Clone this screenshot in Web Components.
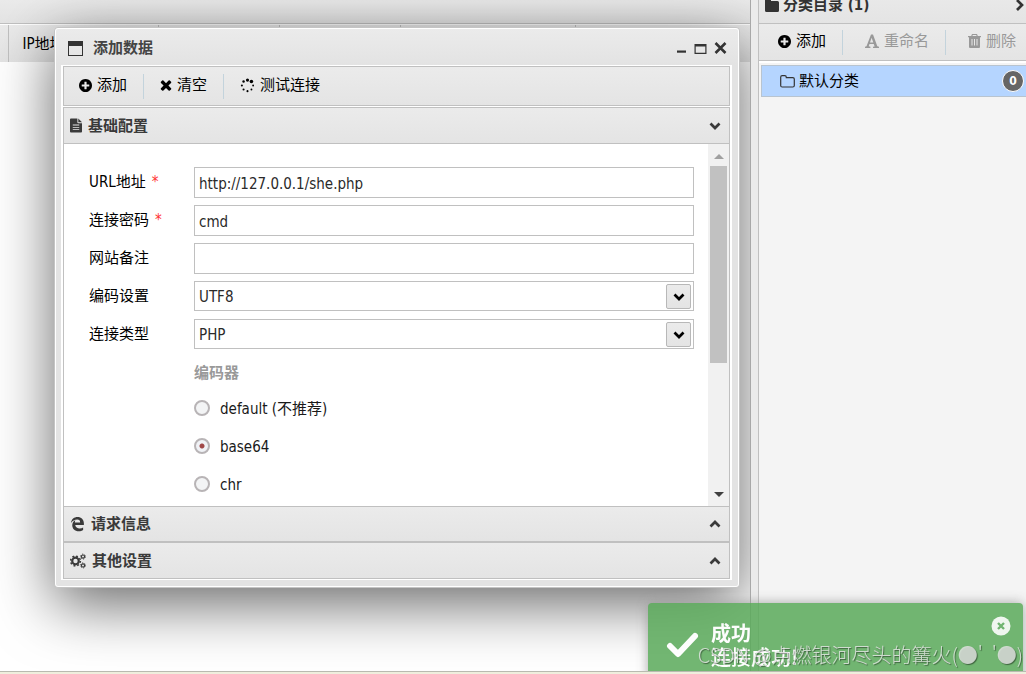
<!DOCTYPE html>
<html lang="zh-CN">
<head>
<meta charset="utf-8">
<title>数据管理</title>
<style>
html, body { height: 100%; margin: 0; }
body {
  overflow: hidden;
  background: #ebebeb;
  color: #000;
  font: 15px/20px "DejaVu Sans Condensed", "Noto Sans CJK SC", sans-serif;
  --line: #c0c0c0;
  --bar: linear-gradient(#ebebeb, #e4e4e4);
}
</style>
</head>
<body>
<app-shell>
  <data-grid slot="main"></data-grid>
  <modal-window slot="main" heading="添加数据">
    <tool-bar slot="tools" class="boxed">
      <tool-button icon="plus">添加</tool-button>
      <tool-button icon="times">清空</tool-button>
      <tool-button icon="spinner">测试连接</tool-button>
    </tool-bar>
    <accordion-section icon="file" heading="基础配置" open>
      <form-row label="URL地址" required value="http://127.0.0.1/she.php"></form-row>
      <form-row label="连接密码" required value="cmd"></form-row>
      <form-row label="网站备注"></form-row>
      <form-row label="编码设置" options="UTF8,GBK"></form-row>
      <form-row label="连接类型" options="PHP,ASP"></form-row>
      <radio-list heading="编码器" options="default (不推荐)|base64|chr" selected="1"></radio-list>
    </accordion-section>
    <accordion-section icon="edge" heading="请求信息"></accordion-section>
    <accordion-section icon="cogs" heading="其他设置"></accordion-section>
  </modal-window>
  <category-panel slot="side">
    <tool-bar slot="tools" class="wide">
      <tool-button icon="plus">添加</tool-button>
      <tool-button icon="font" disabled>重命名</tool-button>
      <tool-button icon="trash" disabled>删除</tool-button>
    </tool-bar>
    <category-item count="0">默认分类</category-item>
  </category-panel>
  <toast-message slot="overlay" heading="成功">连接成功!</toast-message>
  <water-mark slot="overlay">CSDN @点燃银河尽头的篝火(●'&nbsp;&nbsp;'●)</water-mark>
</app-shell>

<script>
const ICONS = {
  plus: [13, 13, '128 128 1536 1536', '<path d="M1344 960v-128q0-26-19-45t-45-19h-256v-256q0-26-19-45t-45-19h-128q-26 0-45 19t-19 45v256h-256q-26 0-45 19t-19 45v128q0 26 19 45t45 19h256v256q0 26 19 45t45 19h128q26 0 45-19t19-45v-256h256q26 0 45-19t19-45zm320-64q0 209-103 385.5t-279.5 279.5-385.5 103-385.5-103-279.5-279.5-103-385.5 103-385.5 279.5-279.5 385.5-103 385.5 103 279.5 279.5 103 385.5z"/>'],
  times: [12, 12, '220 220 1350 1350', '<path d="M1490 1322q0 40-28 68l-136 136q-28 28-68 28t-68-28l-294-294-294 294q-28 28-68 28t-68-28l-136-136q-28-28-28-68t28-68l294-294-294-294q-28-28-28-68t28-68l136-136q28-28 68-28t68 28l294 294 294-294q28-28 68-28t68 28l136 136q28 28 28 68t-28 68l-294 294 294 294q28 28 28 68z"/>'],
  spinner: [15, 15, '0 0 16 16', '<circle cx="8" cy="2.2" r="1.700"/><circle cx="12.200" cy="3.800" r="1.900"/><circle cx="3.800" cy="3.800" r="1.300"/><circle cx="2" cy="8" r="1.100"/><circle cx="14" cy="8" r="1"/><circle cx="3.800" cy="12.200" r="1.100"/><circle cx="12.200" cy="12.200" r="1"/><circle cx="8" cy="14" r="1.100"/>'],
  file: [12, 15, '0 0 13 15', '<path d="M0 1q0-1 1-1h7v4q0 1 1 1h4v9q0 1-1 1H1q-1 0-1-1zM3 6.5v1h7v-1zM3 9v1h7V9zM3 11.5v1h7v-1z" fill-rule="evenodd"/><path d="M9 0l4 4H9z"/>'],
  edge: [15, 16, '0 0 16 17', '<path d="M1 7.4C1.6 3.2 4.4 1 8 1c4 0 6.800 2.800 6.800 6.600v2H5.600C5.800 12 8 13.200 10.200 13.200c1.600 0 2.800-.4 3.800-1v2.700C12.800 15.700 11.200 16.200 9.400 16.200 5 16.200 2.400 13.400 2.400 9.800c0-2.400 1.200-4.400 3.400-5.400-.4.6-.6 1.600-.6 2.400h5.600C10.800 4.800 9.800 3.800 7.800 3.800 5 3.800 2.400 5.200 1 7.400z"/>'],
  cogs: [16, 16, '0 0 16 16', '<g fill="none" stroke="currentColor"><circle cx="5.500" cy="8" r="3.300" stroke-width="2.200"/><circle cx="5.500" cy="8" r="4.900" stroke-width="1.500" stroke-dasharray="1.900 1.950"/><circle cx="13" cy="3.600" r="1.600" stroke-width="1.200"/><circle cx="13" cy="3.600" r="2.500" stroke-width=".9" stroke-dasharray="1.200 1.420"/><circle cx="13" cy="12.400" r="1.600" stroke-width="1.200"/><circle cx="13" cy="12.400" r="2.500" stroke-width=".9" stroke-dasharray="1.200 1.420"/></g>'],
  down: [12, 12, '0 0 12 12', '<path d="M1.500 3.500L6 8l4.500-4.500" fill="none" stroke="currentColor" stroke-width="2.700"/>'],
  up: [12, 12, '0 0 12 12', '<path d="M1.500 8.500L6 4l4.500 4.500" fill="none" stroke="currentColor" stroke-width="2.700"/>'],
  right: [12, 12, '0 0 12 12', '<path d="M4 1l5 5-5 5" fill="none" stroke="currentColor" stroke-width="2.700"/>'],
  font: [14, 14, '0 0 14 14', '<path d="M0 14v-1.200l1.500-.5L6 .5h2L12.300 12.300l1.700.5V14H8v-1.200l1.600-.4-.8-2.500H4.500l-.8 2.400 1.700.5V14zM5 8.400h3.300L6.600 3.700z" fill-rule="evenodd"/>'],
  trash: [13, 14, '0 0 13 14', '<path d="M4 0h5l.8 2H13v1.300h-1V13q0 1-1 1H2q-1 0-1-1V3.300H0V2h3.200zm.8 1l-.4 1h4.200l-.4-1zM3.500 5v6.500h1V5zM6 5v6.500h1V5zM8.500 5v6.500h1V5z" fill-rule="evenodd"/>'],
  folder: [14, 13, '0 0 14 13', '<path d="M0 1.500Q0 0 1.500 0h3Q6 0 6 1.500V2h6.500Q14 2 14 3.500v8q0 1.500-1.500 1.500h-11Q0 13 0 11.500z"/>'],
  folderOpen: [15, 13, '0 0 15 13', '<path d="M.7 2.200Q.7.700 2.200.7h2.600q1.500 0 1.500 1.500v.4h6.500q1.500 0 1.500 1.500v6.400q0 1.500-1.500 1.500H2.200Q.7 12 .7 10.500z" fill="none" stroke="currentColor" stroke-width="1.200"/>'],
  window: [15, 15, '0 0 15 15', '<path d="M0 0h15v15H0zM1 5v9h13V5z" fill-rule="evenodd"/>'],
  minimize: [10, 12, '0 0 10 12', '<path d="M0 8.500h9v2.200H0z"/>'],
  maximize: [13, 11, '0 0 13 11', '<path d="M.5 1h12v10H.5zM1.700 3.600v6.200h9.600V3.600z" fill-rule="evenodd"/>'],
  close: [13, 12, '0 0 13 12', '<path d="M1.500 1l10 10M11.500 1l-10 10" stroke="currentColor" stroke-width="2.600"/>'],
  check: [34, 28, '0 0 34 28', '<path d="M5 15l8 8L30 5" fill="none" stroke="currentColor" stroke-width="6" stroke-linecap="round" stroke-linejoin="round"/>'],
  dismiss: [20, 20, '0 0 20 20', '<circle cx="10" cy="10" r="9.500"/><path d="M7 7l6 6M13 7l-6 6" stroke="#5baa5b" stroke-width="2.400"/>']
};

function define(name, render) {
  customElements.define(name, class extends HTMLElement {
    connectedCallback() {
      if (this.shadowRoot) return;
      this.attachShadow({ mode: 'open' }).innerHTML = render(this);
    }
  });
}

define('ui-icon', el => {
  const [w, h, box, body] = ICONS[el.getAttribute('name')];
  return `<style>:host{display:inline-flex;flex:none}svg{display:block;fill:currentColor}</style>
    <svg width="${w}" height="${h}" viewBox="${box}" aria-hidden="true">${body}</svg>`;
});

define('app-shell', () => `<style>
  :host { display: grid; height: 100vh; grid-template: minmax(0, 1fr) 3px / minmax(0, 1fr) 268px; column-gap: 7px; }
  .main { position: relative; overflow: hidden; background: #fff; border-right: 1px solid #a8a8a8; }
  .side { overflow: hidden; border-left: 1px solid var(--line); background: #f4f4f4; }
  footer { grid-column: 1 / -1; position: relative; z-index: 3; background: #efeedd; border-top: 1px solid #b9bab0; }
  </style>
  <div class="main"><slot name="main"></slot></div>
  <div class="side"><slot name="side"></slot></div>
  <footer></footer>
  <slot name="overlay"></slot>`);

define('data-grid', () => `<style>
  :host { display: block; }
  .bar { height: 23px; background: var(--bar); border-bottom: 1px solid var(--line); }
  table { width: 100%; margin-top: 1px; table-layout: fixed; border-collapse: collapse; background: var(--bar); }
  th { height: 37px; padding: 0 0 0 14px; font-weight: normal; text-align: left; border-right: 1px solid var(--line); box-sizing: border-box; }
  th:last-child { border-right: 0; }
  </style>
  <div class="bar"></div>
  <table><colgroup><col style="width:8px"><col style="width:150px"><col style="width:121px"><col style="width:121px"><col style="width:175px"><col></colgroup>
  <thead><tr><th></th><th>IP地址</th><th></th><th></th><th></th><th></th></tr></thead></table>`);

define('tool-bar', () => `<style>
  :host { display: flex; align-items: center; height: 36px; background: var(--bar); }
  :host(.boxed) { height: 38px; border: 1px solid var(--line); --pad: 16px; --pad-first: 15px; }
  :host(.wide) { --pad: 22px; --pad-first: 19px; }
  </style><slot></slot>`);

define('tool-button', el => `<style>
  :host { display: block; flex: none; border-right: 1px solid #c3d3dc; }
  :host(:last-child) { border: 0; }
  button { display: flex; align-items: center; gap: 5px; height: 25px; padding: 0 16px 2px var(--pad); border: 0; background: none; color: #000; font: inherit; white-space: nowrap; }
  :host(:first-child) button { padding-left: var(--pad-first); }
  button:disabled { color: #999; }
  </style>
  <button type="button" ${el.hasAttribute('disabled') ? 'disabled' : ''}><ui-icon name="${el.getAttribute('icon')}"></ui-icon><slot></slot></button>`);

define('modal-window', el => `<style>
  :host { position: absolute; top: 27px; left: 54px; width: 686px; box-sizing: border-box; border: 1px solid #c4c4c4; border-radius: 4px; background: #e3e3e3; box-shadow: 0 16px 60px rgba(0, 0, 0, .6); }
  .frame { border: 1px solid #fff; border-radius: 3px; padding: 0 6px 6px 5px; background: linear-gradient(#ebebeb, #e3e3e3 36px); }
  header { display: flex; align-items: center; height: 36px; padding: 2px 5px 0 7px; box-sizing: border-box; color: #333; }
  h1 { flex: 1; margin: 0 0 0 10px; font-size: 15px; line-height: 20px; color: #444; }
  button { display: flex; padding: 0; border: 0; background: none; color: #333; margin-left: 7px; }
  .body { border: solid #fff; border-width: 1px 2px; }
  .gap { background: #fff; height: 1px; }
  </style>
  <div class="frame" role="dialog" aria-label="${el.getAttribute('heading')}">
    <header><ui-icon name="window"></ui-icon><h1>${el.getAttribute('heading')}</h1>
      <button type="button" aria-label="最小化"><ui-icon name="minimize"></ui-icon></button>
      <button type="button" aria-label="最大化"><ui-icon name="maximize"></ui-icon></button>
      <button type="button" aria-label="关闭"><ui-icon name="close"></ui-icon></button></header>
    <div class="body"><slot name="tools"></slot><div class="gap"></div><slot></slot></div>
  </div>`);

define('accordion-section', el => {
  const open = el.hasAttribute('open');
  return `<style>
  :host { display: block; }
  h2 { margin: 0; font-size: 15px; line-height: 20px; }
  h2 button { display: flex; align-items: center; gap: 6px; width: 100%; height: 36px; box-sizing: border-box; padding: 0 8px 0 6px; border: 1px solid var(--line); background: var(--bar); color: #3a3a3a; font: inherit; text-align: left; }
  :host([open]) h2 button { height: 37px; }
  :host(:last-child) h2 button { height: 37px; }
  h2 span { flex: 1; }
  .panel { display: flex; height: 362px; overflow: hidden; background: #fff; border-right: 1px solid var(--line); border-left: 1px solid var(--line); }
  .content { flex: 1; padding: 23px 14px 0 25px; }
  .scroll { display: flex; flex-direction: column; width: 21px; background: #f1f1f1; align-items: center; }
  .scroll i { flex: none; border: 5px solid transparent; }
  .scroll .a { margin: 10px 0 7px; border-bottom-color: #a0a0a0; border-top-width: 0; }
  .scroll .b { margin: auto 0 9px; border-top-color: #404040; border-bottom-width: 0; }
  .thumb { width: 17px; height: 197px; background: #c1c1c1; }
  </style>
  <h2><button type="button" aria-expanded="${open}"><ui-icon name="${el.getAttribute('icon')}"></ui-icon><span>${el.getAttribute('heading')}</span><ui-icon name="${open ? 'down' : 'up'}"></ui-icon></button></h2>
  ${open ? '<div class="panel"><div class="content"><slot></slot></div><div class="scroll"><i class="a"></i><div class="thumb"></div><i class="b"></i></div></div>' : ''}`;
});

define('form-row', el => {
  const opts = el.getAttribute('options');
  const field = opts
    ? `<div class="select"><select id="f">${opts.split(',').map(o => `<option>${o}</option>`).join('')}</select><span class="arrow"><ui-icon name="down"></ui-icon></span></div>`
    : `<input id="f" type="text" value="${el.getAttribute('value') || ''}">`;
  return `<style>
  :host { display: flex; height: 38px; align-items: flex-start; }
  label { width: 105px; line-height: 30px; }
  b { margin-left: 6px; color: #f33; font-weight: normal; }
  input, select { display: block; width: 100%; box-sizing: border-box; margin: 0; padding: 2px 4px 0; border: 1px solid var(--line); border-radius: 0; background: #fff; color: #2a2a2a; font: inherit; outline: 0; }
  input { flex: 1; height: 31px; }
  select { appearance: none; height: 30px; }
  .select { position: relative; flex: 1; }
  .arrow { position: absolute; top: 3px; right: 3px; display: flex; align-items: center; justify-content: center; width: 23px; height: 23px; border: 1px solid #b8b8b8; border-radius: 2px; background: var(--bar); pointer-events: none; }
  </style>
  <label for="f">${el.getAttribute('label')}${el.hasAttribute('required') ? '<b>*</b>' : ''}</label>${field}`;
});

define('radio-list', el => `<style>
  fieldset { margin: 0 0 0 105px; padding: 0; border: 0; min-width: 0; }
  legend { padding: 0; height: 32px; line-height: 32px; font-weight: bold; color: #999; }
  label { display: flex; align-items: center; gap: 10px; height: 38px; color: #1a1a1a; }
  span { padding-top: 2px; }
  input { appearance: none; width: 16px; height: 16px; margin: 0; border: 2px solid #b8b4b6; border-radius: 50%; background: #f3f4f5; }
  input:checked { background: radial-gradient(circle, #a04848 2px, #f0f2f6 3px); }
  </style>
  <fieldset><legend>${el.getAttribute('heading')}</legend>
  ${el.getAttribute('options').split('|').map((o, i) => `<label><input type="radio" name="encoder" ${i == el.getAttribute('selected') ? 'checked' : ''}><span>${o}</span></label>`).join('')}
  </fieldset>`);

define('category-panel', () => `<style>
  :host { display: block; }
  header { display: flex; align-items: center; gap: 4px; height: 36px; margin-top: -13px; padding: 0 1px 0 6px; background: var(--bar); border-bottom: 1px solid var(--line); color: #333; }
  h2 { flex: 1; margin: 0; font-size: 15px; line-height: 20px; }
  .tools { border-bottom: 1px solid var(--line); }
  .tree { padding: 2px 0 0 2px; border-top: 2px solid #fff; }
  </style>
  <header><ui-icon name="folder"></ui-icon><h2>分类目录 (1)</h2><ui-icon name="right"></ui-icon></header>
  <div class="tools"><slot name="tools"></slot></div>
  <div class="tree"><slot></slot></div>`);

define('category-item', el => `<style>
  :host { display: flex; align-items: center; gap: 4px; height: 30px; padding: 0 2px 0 18px; border: 1px solid #b8c4d0; border-right: 0; background: #b5d5ff; }
  .name { flex: 1; }
  .badge { display: grid; place-items: center; width: 20px; height: 20px; border: 1px solid #fff; border-radius: 50%; background: #666; color: #fff; font-size: 12px; font-weight: bold; line-height: 20px; }
  ui-icon { color: #333; }
  </style>
  <ui-icon name="folderOpen"></ui-icon><span class="name"><slot></slot></span><span class="badge">${el.getAttribute('count')}</span>`);

define('toast-message', el => `<style>
  :host { position: fixed; z-index: 2; right: 3px; bottom: -7px; display: flex; align-items: flex-start; width: 375px; height: 78px; box-sizing: border-box; padding: 18px 12px 0 17px; border-radius: 4px; background: #5baa5b; box-shadow: 0 0 12px #999; color: #fff; opacity: .86; font-size: 20px; line-height: 24px; }
  .mark { margin: 10px 12px 0 0; display: flex; }
  .text { flex: 1; font-family: "Noto Sans CJK SC", sans-serif; font-weight: 500; }
  strong { display: block; }
  button { display: flex; margin: -5px 0 0; padding: 0; border: 0; background: none; color: #fff; opacity: .9; }
  </style>
  <span class="mark"><ui-icon name="check"></ui-icon></span>
  <div class="text" role="status"><strong>${el.getAttribute('heading')}</strong><slot></slot></div>
  <button type="button" aria-label="关闭"><ui-icon name="dismiss"></ui-icon></button>`);

define('water-mark', () => `<style>
  :host { position: fixed; z-index: 4; right: 3px; bottom: 4px; color: rgba(225, 228, 225, .85); font: 20px/30px "Noto Sans CJK SC", sans-serif; font-weight: 300; text-shadow: 1px 1px 1px rgba(0, 0, 0, .45); white-space: nowrap; pointer-events: none; }
  </style><slot></slot>`);
</script>
</body>
</html>
